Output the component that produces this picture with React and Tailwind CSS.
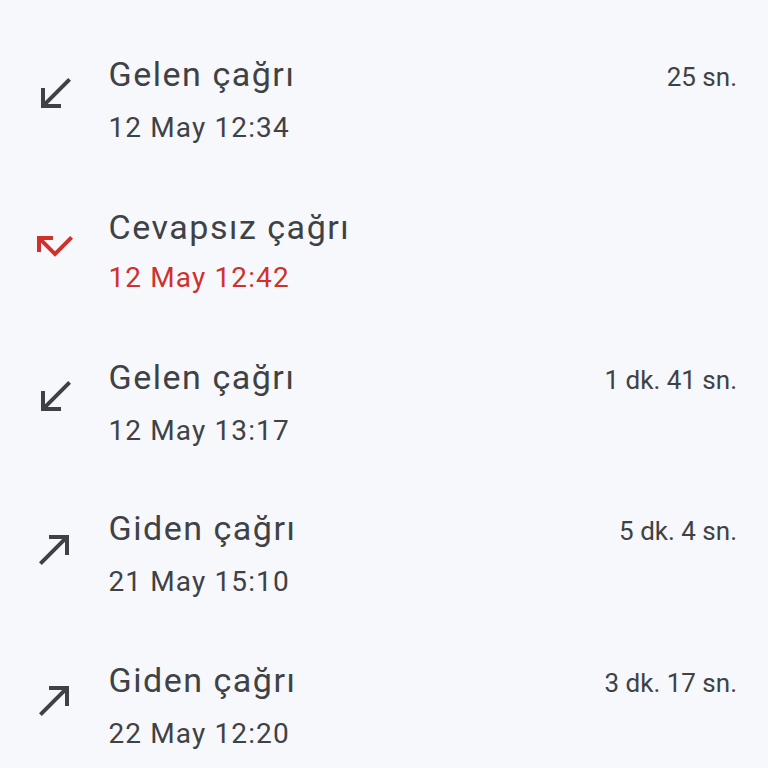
const calls = [
  { type: 'in', title: 'Gelen çağrı', date: '12 May 12:34', duration: '25 sn.' },
  { type: 'missed', title: 'Cevapsız çağrı', date: '12 May 12:42', duration: '' },
  { type: 'in', title: 'Gelen çağrı', date: '12 May 13:17', duration: '1 dk. 41 sn.' },
  { type: 'out', title: 'Giden çağrı', date: '21 May 15:10', duration: '5 dk. 4 sn.' },
  { type: 'out', title: 'Giden çağrı', date: '22 May 12:20', duration: '3 dk. 17 sn.' },
]

function CallIcon({ type }) {
  if (type === 'missed') {
    return (
      <svg width="48" height="48" viewBox="0 0 24 24" fill="#d0312d">
        <path d="M19.59 7L12 14.59 6.41 9H11V7H3v8h2v-4.59l7 7 9-9z" />
      </svg>
    )
  }
  if (type === 'out') {
    return (
      <svg width="48" height="48" viewBox="0 0 24 24" fill="#3f4245">
        <path d="M9 5v2h6.59L4 18.59 5.41 20 17 8.41V15h2V5z" />
      </svg>
    )
  }
  return (
    <svg width="48" height="48" viewBox="0 0 24 24" fill="#3f4245">
      <path d="M20 5.41L18.59 4 7 15.59V9H5v10h10v-2H8.41z" />
    </svg>
  )
}

export default function App() {
  return (
    <div className="h-screen w-full overflow-hidden bg-[#f6f8fc] pt-[23px] font-['Roboto',sans-serif] text-[#3f4245]">
      {calls.map((c, i) => (
        <div key={i} className="flex h-[151.5px] items-center pl-[31px] pr-[31px]">
          <div className="-mt-[9px] flex h-12 w-12 shrink-0 items-center justify-center">
            <CallIcon type={c.type} />
          </div>
          <div className="ml-[29.5px] flex flex-1 flex-col">
            <div className="flex items-baseline justify-between">
              <span className="text-[34px] leading-[44px] tracking-[0.045em]">{c.title}</span>
              {c.duration && <span className="text-[26px] leading-[44px]">{c.duration}</span>}
            </div>
            <span
              className={
                'mt-[11px] text-[28px] leading-[36px] tracking-[0.04em] ' +
                (c.type === 'missed' ? 'text-[#d0312d]' : 'text-[#3f4245]')
              }
            >
              {c.date}
            </span>
          </div>
        </div>
      ))}
    </div>
  )
}
